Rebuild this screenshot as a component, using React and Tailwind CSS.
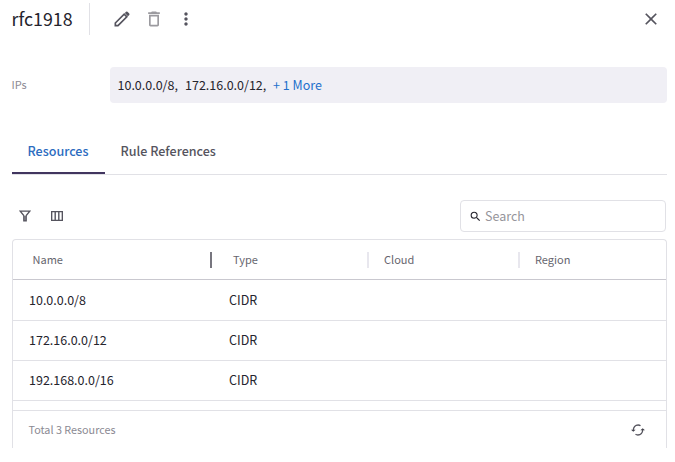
import React from "react";
import { MdDeleteOutline, MdMoreVert, MdClose, MdSearch } from "react-icons/md";

const rows = [
  { name: "10.0.0.0/8", type: "CIDR" },
  { name: "172.16.0.0/12", type: "CIDR" },
  { name: "192.168.0.0/16", type: "CIDR" },
];

function PencilIcon() {
  return (
    <svg width="20" height="20" viewBox="0 0 24 24" fill="none">
      <path d="M4 20V16.8L14.6 6.2L17.8 9.4L7.2 20Z" stroke="#55545e" strokeWidth="2" />
      <path d="M15.4 4.9L16.9 3.3Q17.7 2.6 18.5 3.3L20.7 5.5Q21.4 6.3 20.7 7.1L19.1 8.6Z" fill="#55545e" />
    </svg>
  );
}

function FilterIcon() {
  return (
    <svg width="12" height="12" viewBox="0 0 12 12" fill="none" stroke="#55545e" strokeWidth="1.3">
      <path d="M1.2 1.1H10.8L7.2 5.6V10.9H4.8V5.6Z" />
      <path d="M6 6V11" />
    </svg>
  );
}

function ColumnsIcon() {
  return (
    <svg width="12" height="10" viewBox="0 0 12 10" fill="none" stroke="#55545e" strokeWidth="1.4">
      <path d="M.65 .65H11.35V9.35H.65ZM4.2 .65V9.35M7.8 .65V9.35" />
    </svg>
  );
}

function RefreshIcon() {
  return (
    <svg width="14" height="12" viewBox="0 0 14 12" fill="none" stroke="#55545e" strokeWidth="1.4">
      <path d="M2.3 6.5C2.3 3.3 4.4 1 7.1 1C8 1 8.8 1.2 9.5 1.7M11.7 5.5C11.7 8.7 9.6 11 6.9 11C6 11 5.2 10.8 4.5 10.3" />
      <path d="M0 5.7L2.3 7.8L4.6 5.7ZM9.4 6.3L11.7 4.2L14 6.3Z" fill="#45444e" stroke="none" />
    </svg>
  );
}

export default function App() {
  return (
    <div className="h-[462px] w-[675px] overflow-hidden bg-white pl-3 font-['Noto_Sans_CJK_SC','Noto_Sans',sans-serif] text-[#25242d]">
      <header className="flex h-[38px] items-center">
        <h1 className="-ml-[0.5px] w-[77.5px] pb-0.5 text-[17.8px] leading-6 whitespace-nowrap">rfc1918</h1>
        <div className="h-8 w-px bg-[#e1e1e6]" />
        <div className="ml-[22px] flex items-center gap-3 text-[20px] text-[#55545e]">
          <PencilIcon />
          <MdDeleteOutline className="text-[#9b9a9f]" />
          <MdMoreVert />
        </div>
        <MdClose className="mr-[14px] ml-auto text-[20px] text-[#55545e]" />
      </header>

      <section className="mt-[29px] mr-2 flex h-9 items-center">
        <span className="-ml-[0.5px] w-[98.5px] pb-px text-[11px] text-[#8b8a93]">IPs</span>
        <div className="flex h-9 flex-1 items-center rounded bg-[#f0eff5] pl-[7.5px] text-[12.5px] whitespace-nowrap">
          <span className="w-[67.5px]">10.0.0.0/8,</span>
          <span className="w-[88px]">172.16.0.0/12,</span>
          <a className="text-[#2370cc]">+ 1 More</a>
        </div>
      </section>

      <nav className="mt-[26px] mr-2 flex h-[46px] border-b border-[#e1e1e6] text-[12.55px] font-medium">
        <div className="flex h-[45px] w-[93px] justify-center border-b-2 border-[#41355f] pt-3 pr-px leading-5 text-[#2c6cc0]">Resources</div>
        <div className="pt-3 pl-[15.5px] leading-5 text-[#55545e]">Rule References</div>
      </nav>

      <div className="mt-[25px] mr-[9px] flex h-8 items-center">
        <div className="flex items-center gap-5 pl-[7px]">
          <FilterIcon />
          <ColumnsIcon />
        </div>
        <div className="ml-auto flex h-8 w-[206px] items-center rounded border border-[#e1e1e6] pl-2">
          <MdSearch className="text-[13px] text-[#25242d]" />
          <span className="ml-[3px] text-[12.5px] text-[#96959b]">Search</span>
        </div>
      </div>

      <main className="mt-[7px] mr-2 h-[209px] rounded-t border border-b-0 border-[#e1e1e6]">
        <div className="flex h-10 items-center border-b border-[#c9c8cf] text-[11px] text-[#66656e]">
          <span className="w-[197px] pl-[19.5px]">Name</span>
          <i className="h-4 w-0.5 bg-[#77767f]" />
          <span className="w-[155px] pl-[21px]">Type</span>
          <i className="h-4 w-0.5 bg-[#e8e7ee]" />
          <span className="w-[149px] pl-[15px]">Cloud</span>
          <i className="h-4 w-0.5 bg-[#e8e7ee]" />
          <span className="pl-[15px]">Region</span>
        </div>
        <div className="pt-px">
          {rows.map((row) => (
            <div key={row.name} className="flex h-10 items-center border-b border-[#e1e1e6] pl-4 text-[12.5px]">
              <span className="w-[200px]">{row.name}</span>
              <span>{row.type}</span>
            </div>
          ))}
        </div>
        <footer className="mt-[9px] flex h-[38px] items-center justify-between border-t border-[#e1e1e6] pr-[21px] pl-[15.5px] text-[10.8px] text-[#8b8a93]">
          <span className="pb-px">Total 3 Resources</span>
          <RefreshIcon />
        </footer>
      </main>
    </div>
  );
}
